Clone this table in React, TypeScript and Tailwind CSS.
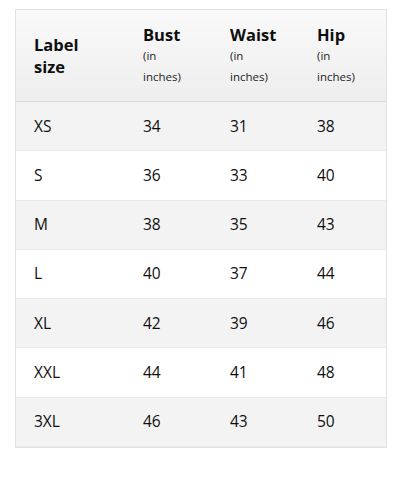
import React from 'react';

const sizes = [
  { label: 'XS', bust: 34, waist: 31, hip: 38 },
  { label: 'S', bust: 36, waist: 33, hip: 40 },
  { label: 'M', bust: 38, waist: 35, hip: 43 },
  { label: 'L', bust: 40, waist: 37, hip: 44 },
  { label: 'XL', bust: 42, waist: 39, hip: 46 },
  { label: 'XXL', bust: 44, waist: 41, hip: 48 },
  { label: '3XL', bust: 46, waist: 43, hip: 50 },
];

const measures = ['Bust', 'Waist', 'Hip'];

const App: React.FC = () => {
  return (
    <div className="w-[402px] h-[500px] bg-white pt-[9px] pl-[15px] font-['Open_Sans',sans-serif] text-[#0f0f0f]">
      <div className="w-[372px] border border-[#e2e2e2]">
        {/* Header */}
        <div className="grid grid-cols-[109px_87px_87px_1fr] h-[92px] bg-gradient-to-b from-[#f9f9f9] to-[#eeeeee] border-b border-[#dadada]">
          <div className="pl-[18px] flex items-center">
            <p className="text-[16.5px] font-bold leading-[22px]">
              Label
              <br />
              size
            </p>
          </div>
          {measures.map((m) => (
            <div key={m} className="pl-[18px] flex flex-col justify-center">
              <p className="text-[16.5px] font-bold leading-[20px]">{m}</p>
              <p className="text-[11.5px] leading-[22px] text-[#222]">(in</p>
              <p className="text-[11.5px] leading-[20px] text-[#222]">inches)</p>
            </div>
          ))}
        </div>

        {/* Rows */}
        {sizes.map((s, i) => (
          <div
            key={s.label}
            className={`grid grid-cols-[109px_87px_87px_1fr] h-[49.3px] items-center text-[15.5px] border-b border-[#eaeaea] ${
              i % 2 === 0 ? 'bg-[#f3f3f3]' : 'bg-white'
            }`}
          >
            <span className="pl-[18px]">{s.label}</span>
            <span className="pl-[18px]">{s.bust}</span>
            <span className="pl-[18px]">{s.waist}</span>
            <span className="pl-[18px]">{s.hip}</span>
          </div>
        ))}
      </div>
    </div>
  );
};

export default App;
